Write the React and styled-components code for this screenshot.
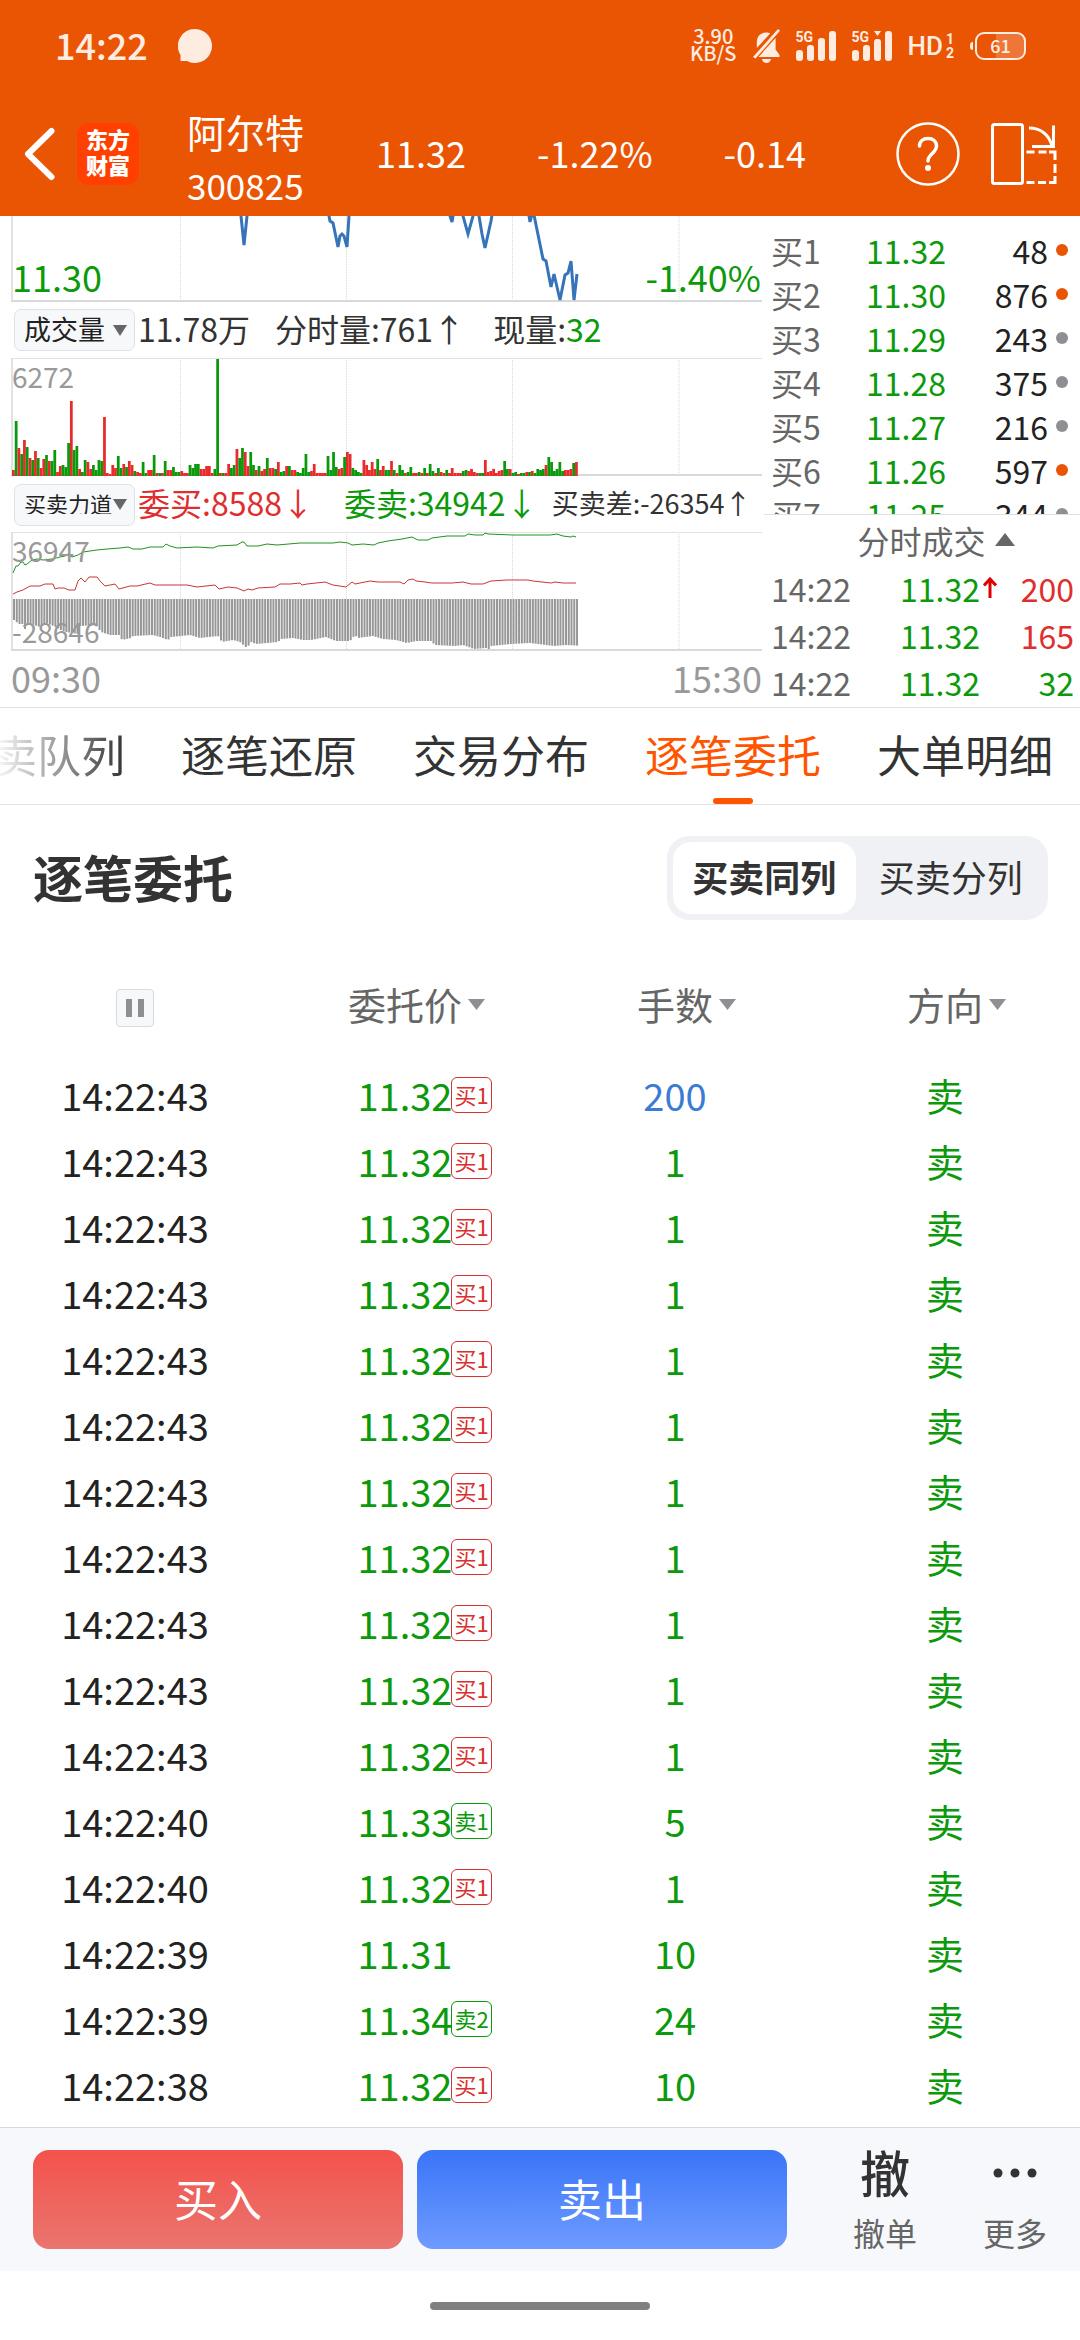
import React, { useState } from "react";
import styled, { createGlobalStyle } from "styled-components";

const GREEN = "#0c990c";
const RED = "#e02d2d";
const ORANGE = "#ea5504";

const GlobalStyle = createGlobalStyle`
  * {
    box-sizing: border-box;
  }
  body {
    margin: 0;
    background: #fff;
    color: #222;
    font-family: "Noto Sans CJK SC", "Noto Sans", sans-serif;
    line-height: 1;
  }
  button,
  select {
    font-family: inherit;
    line-height: 1;
    margin: 0;
    padding: 0;
    border: none;
    background: none;
    color: inherit;
    cursor: pointer;
  }
  table {
    width: 100%;
    border-collapse: collapse;
    table-layout: fixed;
  }
  td,
  th {
    padding: 0;
    font-weight: 400;
  }
  svg {
    display: block;
    flex: none;
  }
`;

/* ---------- top ---------- */

const TopBar = styled.header`
  background: ${ORANGE};
  color: #fff;
`;
const StatusBar = styled.div`
  height: 92px;
  padding: 0 54px 0 55px;
  display: flex;
  align-items: center;
  color: #ffece1;
`;
const Clock = styled.span`
  font-size: 36px;
  font-weight: 500;
  margin-right: 30px;
  padding-bottom: 4px;
`;
const StatusIcons = styled.div`
  margin-left: auto;
  display: flex;
  align-items: center;
  gap: 16px;
`;
const Speed = styled.div`
  padding-bottom: 4px;
  font-size: 20px;
  line-height: 17px;
  font-weight: 500;
  text-align: center;
`;
const Signal = styled.div`
  position: relative;
`;
const SignalLabel = styled.span`
  position: absolute;
  left: 0;
  top: 0;
  font: 700 14px/12px Roboto, sans-serif;
`;
const HdBadge = styled.div`
  display: flex;
  align-items: center;
  gap: 3px;
  font: 500 26px/28px Roboto, sans-serif;
`;
const HdCards = styled.span`
  display: grid;
  font-size: 14px;
  line-height: 14px;
  font-weight: 700;
`;
const Battery = styled.div`
  display: flex;
  align-items: center;
  gap: 2px;
  &::before {
    content: "";
    width: 3px;
    height: 8px;
    border-radius: 3px 0 0 3px;
    background: #ffece1;
  }
`;
const BatteryBody = styled.span`
  width: 51px;
  height: 28px;
  border: 2px solid #ffece1;
  border-radius: 9px;
  background: linear-gradient(to left, #ee7638 60%, transparent 60%);
  font-size: 18px;
  line-height: 22px;
  font-weight: 500;
  text-align: center;
`;

const StockBar = styled.div`
  height: 124px;
  padding: 0 23px;
  display: flex;
  align-items: center;
`;
const IconButton = styled.button`
  display: grid;
  place-items: center;
`;
const Logo = styled.div`
  width: 62px;
  height: 62px;
  margin: 0 48px 0 22px;
  padding-bottom: 6px;
  border-radius: 12px;
  background: #ff4000;
  display: grid;
  align-content: center;
  justify-content: center;
  font-size: 22px;
  line-height: 26px;
  font-weight: 900;
`;
const StockName = styled.div`
  display: grid;
  padding-top: 8px;
  font-size: 39px;
  line-height: 54px;
  & > small {
    font-size: 35px;
    line-height: 54px;
  }
`;
const Quotes = styled.div`
  flex: 1;
  display: flex;
  justify-content: space-between;
  padding: 0 90px 4px 72px;
  font-size: 36px;
`;
const Actions = styled.div`
  display: flex;
  gap: 30px;
`;

/* ---------- charts ---------- */

const Market = styled.section`
  display: grid;
  grid-template-columns: 1fr 316px;
  border-bottom: 1px solid #e0e0e0;
`;
const Charts = styled.div`
  padding: 0 2px 0 11px;
`;
const ChartBox = styled.div`
  position: relative;
  & > svg {
    width: 100%;
    height: ${(p) => p.$height}px;
  }
`;
const ChartLabel = styled.span`
  position: absolute;
  left: ${(p) => (p.$end ? "auto" : "1px")};
  right: ${(p) => (p.$end ? "1px" : "auto")};
  top: ${(p) => p.$top}px;
  font-size: ${(p) => (p.$price ? 36 : 28)}px;
  color: ${(p) => (p.$price ? GREEN : "#999")};
`;
const InfoRow = styled.div`
  height: 56px;
  padding: 0 8px 0 3px;
  display: flex;
  align-items: center;
  white-space: nowrap;
  font-size: 32px;
  color: #333;
`;
const Picker = styled.label`
  position: relative;
  display: block;
  margin-right: 3px;
  & > svg {
    position: absolute;
    right: 8px;
    top: 16px;
    pointer-events: none;
  }
`;
const PickerSelect = styled.select`
  appearance: none;
  width: 121px;
  height: 42px;
  padding: 0 0 4px 9px;
  border: 1px solid #dfe1e8;
  border-radius: 7px;
  background: #f6f8fa;
  color: #222;
  font-size: ${(p) => (p.$long ? 22 : 27)}px;
`;
const Info = styled.span`
  color: ${(p) => p.$color || "inherit"};
  margin-right: ${(p) => p.$gap || 0}px;
  padding-bottom: 4px;
`;
const SmallInfo = styled(Info)`
  font-size: 27px;
`;
const TimeAxis = styled.div`
  height: 56px;
  padding-bottom: 4px;
  display: flex;
  justify-content: space-between;
  align-items: center;
  font-size: 36px;
  color: #999;
`;

/* ---------- order book ---------- */

const Book = styled.div`
  font-size: 32px;
`;
const BookScroll = styled.div`
  height: 298px;
  padding-top: 14px;
  overflow: hidden;
`;
const BookTr = styled.tr`
  height: ${(p) => p.$height}px;
`;
const Cell = styled.td`
  color: ${(p) => p.$color || "#222"};
  text-align: ${(p) => p.$align || "right"};
  padding-left: ${(p) => p.$pad || 0}px;
  padding-bottom: 4px;
`;
const Dot = styled.i`
  display: block;
  width: 12px;
  height: 12px;
  border-radius: 50%;
  background: ${(p) => (p.$hot ? ORANGE : "#8e8e93")};
`;
const BookToggle = styled.button`
  width: 100%;
  height: 52px;
  border-top: 1px solid #e0e0e0;
  display: flex;
  align-items: center;
  justify-content: center;
  gap: 9px;
  padding: 0 0 2px 28px;
  font-size: 32px;
  color: #666;
`;

/* ---------- tabs ---------- */

const Tabs = styled.nav`
  height: 97px;
  padding-right: 27px;
  display: flex;
  justify-content: flex-end;
  gap: 56px;
  overflow: hidden;
  border-bottom: 1px solid #e3e3e3;
`;
const Tab = styled.button`
  position: relative;
  flex: none;
  padding-bottom: 4px;
  font-size: 44px;
  color: ${(p) => (p.$active ? "#ff5500" : "#333")};
  ${(p) => p.$faded && "mask-image: linear-gradient(to right, transparent, #000);"}
  &::after {
    content: "";
    position: absolute;
    left: calc(50% - 20px);
    bottom: 0;
    width: 40px;
    height: 6px;
    border-radius: 3px;
    background: ${(p) => (p.$active ? "#ff5500" : "transparent")};
  }
`;

/* ---------- list ---------- */

const TitleRow = styled.div`
  padding: 31px 32px 0 33px;
  display: flex;
  justify-content: space-between;
  align-items: center;
`;
const Title = styled.h2`
  margin: 0;
  padding-bottom: 4px;
  font-size: 50px;
  font-weight: 700;
  color: #333;
`;
const Segment = styled.div`
  width: 381px;
  height: 84px;
  padding: 6px;
  display: grid;
  grid-template-columns: 1fr 1fr;
  gap: 4px;
  border-radius: 22px;
  background: #f0f1f4;
`;
const SegmentButton = styled.button`
  padding-bottom: 4px;
  border-radius: 18px;
  font-size: 36px;
  color: #333;
  font-weight: ${(p) => (p.$active ? 700 : 400)};
  background: ${(p) => (p.$active ? "#fff" : "transparent")};
`;
const Orders = styled.table`
  margin-top: 56px;
  font-size: 38px;
  text-align: center;
  color: ${GREEN};
  & th {
    height: 88px;
    padding-bottom: 30px;
    color: #666;
  }
  & td {
    height: 66px;
    padding-bottom: 5px;
  }
`;
const SortButton = styled.button`
  position: relative;
  padding-bottom: 2px;
  font-size: 38px;
  & > svg {
    position: absolute;
    left: calc(100% + 6px);
    top: 14px;
  }
`;
const PauseButton = styled.button`
  width: 38px;
  height: 38px;
  border: 1px solid #d6dae1;
  border-radius: 4px;
  background: #f6f8fa;
  display: inline-grid;
  place-items: center;
  vertical-align: middle;
`;
const TimeCell = styled.td`
  color: #222;
`;
const LotsCell = styled.td`
  color: ${(p) => (p.$big ? "#3a7bd5" : "inherit")};
`;
const Price = styled.span`
  position: relative;
`;
const Level = styled.span`
  position: absolute;
  left: calc(100% - 1px);
  top: 10px;
  height: 36px;
  padding: 0 2px;
  border: 1px solid currentColor;
  border-radius: 6px;
  white-space: nowrap;
  font-size: 22px;
  line-height: 33px;
  color: ${(p) => (p.$buy ? "#d93030" : GREEN)};
`;

/* ---------- bottom ---------- */

const TradeBar = styled.footer`
  margin-top: 7px;
  height: 144px;
  padding: 0 33px;
  display: flex;
  align-items: center;
  border-top: 1px solid #d5d7da;
  background: #f6f8fb;
`;
const TradeButton = styled.button`
  flex: 1;
  height: 99px;
  margin-right: 14px;
  padding-bottom: 4px;
  border-radius: 16px;
  color: #fff;
  font-size: 44px;
  background: ${(p) =>
    p.$sell
      ? "linear-gradient(#3975f8, #6f9bff)"
      : "linear-gradient(#f4524c, #ea756f)"};
`;
const ToolButton = styled.button`
  display: grid;
  grid-template-rows: 64px 54px;
  place-items: center;
  margin-left: ${(p) => p.$gap}px;
  font-size: 32px;
  color: #666;
`;
const ToolGlyph = styled.span`
  padding-bottom: 4px;
  font-size: 50px;
  font-weight: 500;
  color: #333;
`;
const HomeBar = styled.div`
  height: 69px;
  display: grid;
  place-items: center;
  &::after {
    content: "";
    width: 220px;
    height: 8px;
    border-radius: 4px;
    background: #808080;
  }
`;

/* ---------- data ---------- */

// one entry per minute, r = up, g = down
const VOLUMES = (
  "r6 g55 r28 g22 r36 g29 r18 g16 r25 g18 r8 r17 g21 r15 g15 g26 r4 r10 g11 g9 g33 r75 g26 g30 r7 g4 g16 r14 r7 g11 " +
  "g6 g16 g15 r59 r3 r2 r11 r8 g20 g8 r12 g9 r15 r11 g5 r4 r3 g14 g3 r6 r6 g21 r3 g3 r3 g15 r6 r6 g9 g4 " +
  "g4 r5 r3 r3 g11 g8 g12 g12 r7 r7 r10 r10 r3 g7 g117 r3 g3 r3 r12 g8 g11 r27 g18 g28 r24 r10 g24 g11 r6 g10 " +
  "r5 r7 g18 r8 r8 g7 r14 g4 g5 r10 g10 r6 r6 g4 g3 g8 g22 g4 r5 r12 r3 r3 r3 r3 g20 g6 g24 g9 r7 r8 " +
  "g19 r24 r22 g8 g6 g4 g3 r16 r11 r6 r14 r7 g17 r6 r10 g6 g6 r15 g6 r3 g11 g6 r3 g4 g9 r3 r3 g4 r3 g8 " +
  "r3 g12 g5 r3 g8 r4 r3 g6 r3 r8 r3 r3 r3 g5 g6 r5 r7 r4 r3 g3 g3 r16 r4 r5 r7 r3 r5 r6 g15 g7 " +
  "r7 g3 g4 r2 g3 g3 r4 g4 r5 g3 g7 g6 g7 r11 g19 g14 g5 g7 g14 g5 r6 r6 r7 g13 r14"
).split(" ");
const STEP = 2.76;

const PRICE_LINE =
  "225,-20 230,0 233,29 236,0 240,-20 312,-20 318,0 319,5 322,7 327,31 329,20 331,18 333,20 336,31 338,0 340,-30 " +
  "436,-20 439,0 441,6 442,0 446,-20 450,-10 452,0 457,18 462,0 466,-10 468,0 471,18 474,32 480,5 481,-1 484,-20 512,-20 " +
  "518,0 519,6 521,-2 523,-1 532,43 535,45 540,71 543,58 549,84 554,59 557,57 560,45 563,84 566,58";

const SELL_LINE =
  "2,41 5,34 7,34 10,30 12,30 14,33 16,32 21,28 26,27 32,28 41,27 49,25 54,24 57,22 61,25 67,23 72,20 79,19 86,18 96,17 109,16 " +
  "117,15 122,17 131,17 139,15 152,15 155,12 159,14 166,16 186,15 202,16 207,14 226,13 231,10 233,10 236,14 247,14 256,12 266,13 " +
  "289,11 322,11 329,10 337,11 341,13 352,12 363,13 367,11 377,9 391,7 401,5 407,8 417,8 421,6 436,4 454,4 457,2 464,3 472,3 " +
  "474,1 477,2 502,3 539,3 546,2 552,4 560,5 562,4 565,5";

const BUY_LINE =
  "2,62 6,60 12,58 19,54 29,54 34,52 42,52 44,57 47,56 53,56 58,58 64,58 67,49 70,46 74,50 78,45 86,45 89,49 94,54 104,52 108,57 " +
  "119,54 126,54 139,51 144,53 176,53 186,55 204,53 208,57 217,55 226,56 233,59 237,57 241,58 247,56 264,55 269,52 279,52 289,51 " +
  "291,53 296,52 314,50 322,53 335,55 341,50 344,52 359,49 367,50 389,50 393,52 397,48 402,47 405,49 414,50 421,51 441,51 452,50 " +
  "460,52 472,52 480,49 496,48 517,48 522,49 540,51 544,50 552,51 565,51";

// lower edge of the buy/sell difference bars
const DIFF_EDGE = [
  [0, 88], [5, 92], [10, 92], [11, 97], [14, 91], [26, 95], [32, 91], [42, 95], [47, 98], [52, 100], [64, 102], [66, 94],
  [82, 93], [87, 100], [96, 103], [106, 103], [108, 108], [117, 106], [119, 104], [139, 103], [146, 105], [154, 108],
  [157, 105], [176, 103], [186, 106], [204, 104], [208, 110], [219, 108], [226, 110], [233, 116], [237, 110], [242, 112],
  [264, 110], [267, 107], [279, 106], [289, 108], [297, 108], [312, 105], [322, 109], [336, 109], [341, 103], [344, 106],
  [359, 104], [369, 107], [382, 108], [393, 111], [402, 109], [417, 109], [421, 113], [441, 114], [449, 113], [460, 117],
  [472, 116], [474, 118], [477, 114], [497, 112], [516, 111], [540, 114], [552, 113], [570, 114],
];

const edgeAt = (x) => {
  const i = DIFF_EDGE.findIndex((p) => p[0] > x);
  const [x0, y0] = DIFF_EDGE[i - 1];
  const [x1, y1] = DIFF_EDGE[i];
  return y0 + ((y1 - y0) * (x - x0)) / (x1 - x0);
};

const BOOK = [
  ["买1", "11.32", 48, true],
  ["买2", "11.30", 876, true],
  ["买3", "11.29", 243, false],
  ["买4", "11.28", 375, false],
  ["买5", "11.27", 216, false],
  ["买6", "11.26", 597, true],
  ["买7", "11.25", 344, false],
];

const TRADES = [
  { price: "11.32", lots: 200, color: RED, up: true },
  { price: "11.32", lots: 165, color: RED },
  { price: "11.32", lots: 32, color: GREEN },
];

const ORDERS = [
  ["14:22:43", "11.32", "买1", 200],
  ...Array(10).fill(["14:22:43", "11.32", "买1", 1]),
  ["14:22:40", "11.33", "卖1", 5],
  ["14:22:40", "11.32", "买1", 1],
  ["14:22:39", "11.31", "", 10],
  ["14:22:39", "11.34", "卖2", 24],
  ["14:22:38", "11.32", "买1", 10],
];

const TABS = ["卖队列", "逐笔还原", "交易分布", "逐笔委托", "大单明细"];

/* ---------- pieces ---------- */

const Triangle = ({ w, h, color = "#666", up }) => (
  <svg width={w} height={h} viewBox="0 0 10 10" preserveAspectRatio="none" aria-hidden="true">
    <path d={up ? "M0 10L5 0L10 10Z" : "M0 0H10L5 10Z"} fill={color} />
  </svg>
);

const Bars = ({ activity }) => (
  <Signal>
    <svg width="40" height="30" viewBox="0 0 40 30" fill="#ffece1">
      <rect x="0" y="19" width="7" height="11" rx="3" />
      <rect x="11" y="14" width="7" height="16" rx="3" />
      <rect x="22" y={activity ? 8 : 7} width="7" height={activity ? 22 : 23} rx="3" />
      <rect x="33" y="0" width="7" height="30" rx="3" />
      {activity && <path d="M22 0h7l-3.500 5z" />}
    </svg>
    <SignalLabel>5G</SignalLabel>
  </Signal>
);

const Grid = ({ height }) => (
  <g stroke="#d9d9d9" fill="none">
    <path d={`M1 0V${height}`} strokeWidth="2" stroke="#e2e2e2" />
    <path d={`M0 ${height - 1}H751`} strokeWidth="2" />
    <path
      d={`M169.500 0V${height}M335.500 0V${height}M501.500 0V${height}M668 0V${height}`}
      strokeDasharray="1 1"
    />
  </g>
);

const TypePicker = ({ label, options, long }) => (
  <Picker>
    <PickerSelect aria-label={label} $long={long}>
      {options.map((o) => (
        <option key={o}>{o}</option>
      ))}
    </PickerSelect>
    <Triangle w={14} h={11} />
  </Picker>
);

function Header() {
  return (
    <TopBar>
      <StatusBar>
        <Clock>14:22</Clock>
        <svg width="34" height="34" viewBox="0 0 34 34" fill="#ffece1">
          <path d="M17 0a17 17 0 1 1-8 32H2.500v-6A17 17 0 0 1 17 0z" />
        </svg>
        <StatusIcons>
          <Speed>
            3.90
            <br />
            KB/S
          </Speed>
          <svg width="27" height="34" viewBox="0 0 27 34" fill="#ffece1">
            <path d="M13 3.500c2 0 3 .4 4.200 1L3.800 19V13C3.800 7.500 7.500 3.500 13 3.500z" />
            <path d="M22.600 9v11.500L26.500 26v2H5.500z" />
            <path d="M0 28L25 0l2 1.800L2.500 29.500z" />
            <path d="M9 30h9c-.5 2.500-2.300 4-4.500 4S9.500 32.500 9 30z" />
          </svg>
          <Bars />
          <Bars activity />
          <HdBadge>
            HD
            <HdCards>
              <span>1</span>
              <span>2</span>
            </HdCards>
          </HdBadge>
          <Battery>
            <BatteryBody>61</BatteryBody>
          </Battery>
        </StatusIcons>
      </StatusBar>
      <StockBar>
        <IconButton aria-label="返回">
          <svg width="32" height="54" viewBox="0 0 32 54" fill="none" stroke="#fff" strokeWidth="6">
            <path d="M28.500 4L5 27L28.500 50" strokeLinecap="round" strokeLinejoin="round" />
          </svg>
        </IconButton>
        <Logo>
          <span>东方</span>
          <span>财富</span>
        </Logo>
        <StockName>
          阿尔特
          <small>300825</small>
        </StockName>
        <Quotes>
          <span>11.32</span>
          <span>-1.22%</span>
          <span>-0.14</span>
        </Quotes>
        <Actions>
          <IconButton aria-label="帮助">
            <svg width="64" height="64" viewBox="0 0 64 64" fill="none" stroke="#fff">
              <circle cx="32" cy="32" r="30.500" strokeWidth="2.500" />
              <path
                d="M23.500 24c0-4.500 3.500-7.500 8.500-7.500s8.500 3 8.500 7.500c0 7-8.500 8-8.500 15"
                strokeWidth="3.500"
                strokeLinecap="round"
              />
              <circle cx="32" cy="46" r="3" fill="#fff" stroke="none" />
            </svg>
          </IconButton>
          <IconButton aria-label="横屏">
            <svg width="67" height="64" viewBox="0 0 67 64" fill="none" stroke="#fff" strokeWidth="3">
              <rect x="2.500" y="2.500" width="30" height="59" rx="2" />
              <path d="M39 6c11 0 20 6 23 18" />
              <path d="M63.500 3.500V24.500H42" />
              <path d="M36.500 30h8M48.500 30h8M59 30h6v8M65 42v9M65 54v6.500H59M56 60.500h-8M44.500 60.500h-8" />
            </svg>
          </IconButton>
        </Actions>
      </StockBar>
    </TopBar>
  );
}

function ChartPanel() {
  return (
    <Charts>
      <ChartBox $height={86}>
        <svg viewBox="0 0 751 86" preserveAspectRatio="none">
          <Grid height={86} />
          <polyline points={PRICE_LINE} fill="none" stroke="#3574b9" strokeWidth="3" />
        </svg>
        <ChartLabel $price $top={42}>11.30</ChartLabel>
        <ChartLabel $price $end $top={42}>-1.40%</ChartLabel>
      </ChartBox>
      <InfoRow>
        <TypePicker label="指标一" options={["成交量"]} />
        <Info $gap={25}>11.78万</Info>
        <Info $gap={28}>分时量:761↑</Info>
        <Info>现量:</Info>
        <Info $color={GREEN}>32</Info>
      </InfoRow>
      <ChartBox $height={118}>
        <svg viewBox="0 0 751 118" preserveAspectRatio="none">
          <Grid height={118} />
          <path d="M0 .5H751" stroke="#e2e2e2" />
          {VOLUMES.map((v, i) => {
            const h = Number(v.slice(1));
            return (
              <rect
                key={i}
                x={1 + i * STEP}
                y={118 - h}
                width={STEP}
                height={h}
                fill={v[0] === "r" ? "#e82a2a" : "#0a990a"}
              />
            );
          })}
        </svg>
        <ChartLabel $top={4}>6272</ChartLabel>
      </ChartBox>
      <InfoRow>
        <TypePicker label="指标二" options={["买卖力道"]} long />
        <Info $color={RED} $gap={30}>委买:8588↓</Info>
        <Info $color={GREEN} $gap={14}>委卖:34942↓</Info>
        <SmallInfo>买卖差:-26354↑</SmallInfo>
      </InfoRow>
      <ChartBox $height={119}>
        <svg viewBox="0 0 751 119" preserveAspectRatio="none">
          <Grid height={119} />
          <path d="M0 .5H751" stroke="#e2e2e2" />
          {VOLUMES.map((v, i) => (
            <rect
              key={i}
              x={2 + i * STEP}
              y="67"
              width="2"
              height={edgeAt(i * STEP) - 67}
              fill="#979797"
            />
          ))}
          <polyline points={SELL_LINE} fill="none" stroke="#1f931f" />
          <polyline points={BUY_LINE} fill="none" stroke="#c93636" />
        </svg>
        <ChartLabel $top={4}>36947</ChartLabel>
        <ChartLabel $top={85}>-28646</ChartLabel>
      </ChartBox>
      <TimeAxis>
        <span>09:30</span>
        <span>15:30</span>
      </TimeAxis>
    </Charts>
  );
}

function OrderBook() {
  return (
    <Book>
      <BookScroll>
        <table>
          <colgroup>
            <col width="80" />
            <col width="102" />
            <col width="102" />
            <col width="32" />
          </colgroup>
          <tbody>
            {BOOK.map(([name, price, lots, hot]) => (
              <BookTr key={name} $height={44}>
                <Cell $align="left" $color="#666" $pad={7}>{name}</Cell>
                <Cell $color={GREEN}>{price}</Cell>
                <Cell>{lots}</Cell>
                <Cell $pad={8}>
                  <Dot $hot={hot} />
                </Cell>
              </BookTr>
            ))}
          </tbody>
        </table>
      </BookScroll>
      <BookToggle>
        分时成交
        <Triangle w={20} h={13} up />
      </BookToggle>
      <table>
        <colgroup>
          <col width="100" />
          <col width="116" />
          <col width="20" />
          <col width="74" />
          <col width="6" />
        </colgroup>
        <tbody>
          {TRADES.map((t, i) => (
            <BookTr key={i} $height={47}>
              <Cell $align="left" $color="#666" $pad={7}>14:22</Cell>
              <Cell $color={GREEN}>{t.price}</Cell>
              <Cell $pad={3}>
                {t.up && (
                  <svg width="14" height="21" viewBox="0 0 14 21" fill="none" stroke="#e00000" strokeWidth="3">
                    <path d="M7 21V2M1 8.500L7 2L13 8.500" />
                  </svg>
                )}
              </Cell>
              <Cell $color={t.color}>{t.lots}</Cell>
              <td />
            </BookTr>
          ))}
        </tbody>
      </table>
    </Book>
  );
}

function OrderList() {
  const [split, setSplit] = useState(false);
  return (
    <section>
      <TitleRow>
        <Title>逐笔委托</Title>
        <Segment>
          <SegmentButton $active={!split} onClick={() => setSplit(false)}>
            买卖同列
          </SegmentButton>
          <SegmentButton $active={split} onClick={() => setSplit(true)}>
            买卖分列
          </SegmentButton>
        </Segment>
      </TitleRow>
      <Orders>
        <thead>
          <tr>
            <th>
              <PauseButton aria-label="暂停">
                <svg width="18" height="18" viewBox="0 0 18 18" fill="#8e8e93">
                  <rect x="0" y="0" width="6" height="18" />
                  <rect x="12" y="0" width="6" height="18" />
                </svg>
              </PauseButton>
            </th>
            {["委托价", "手数", "方向"].map((name) => (
              <th key={name}>
                <SortButton>
                  {name}
                  <Triangle w={17} h={11} color="#8e8e93" />
                </SortButton>
              </th>
            ))}
          </tr>
        </thead>
        <tbody>
          {ORDERS.map(([time, price, level, lots], i) => (
            <tr key={i}>
              <TimeCell>{time}</TimeCell>
              <td>
                <Price>
                  {price}
                  {level && <Level $buy={level[0] === "买"}>{level}</Level>}
                </Price>
              </td>
              <LotsCell $big={lots >= 100}>{lots}</LotsCell>
              <td>卖</td>
            </tr>
          ))}
        </tbody>
      </Orders>
    </section>
  );
}

export default function App() {
  const [tab, setTab] = useState("逐笔委托");
  return (
    <>
      <GlobalStyle />
      <Header />
      <Market>
        <ChartPanel />
        <OrderBook />
      </Market>
      <Tabs>
        {TABS.map((name, i) => (
          <Tab key={name} $active={name === tab} $faded={i === 0} onClick={() => setTab(name)}>
            {name}
          </Tab>
        ))}
      </Tabs>
      <OrderList />
      <TradeBar>
        <TradeButton>买入</TradeButton>
        <TradeButton $sell>卖出</TradeButton>
        <ToolButton $gap={52}>
          <ToolGlyph>撤</ToolGlyph>
          撤单
        </ToolButton>
        <ToolButton $gap={66}>
          <svg width="44" height="10" viewBox="0 0 44 10" fill="#333">
            <circle cx="5" cy="5" r="4.500" />
            <circle cx="22" cy="5" r="4.500" />
            <circle cx="39" cy="5" r="4.500" />
          </svg>
          更多
        </ToolButton>
      </TradeBar>
      <HomeBar />
    </>
  );
}
